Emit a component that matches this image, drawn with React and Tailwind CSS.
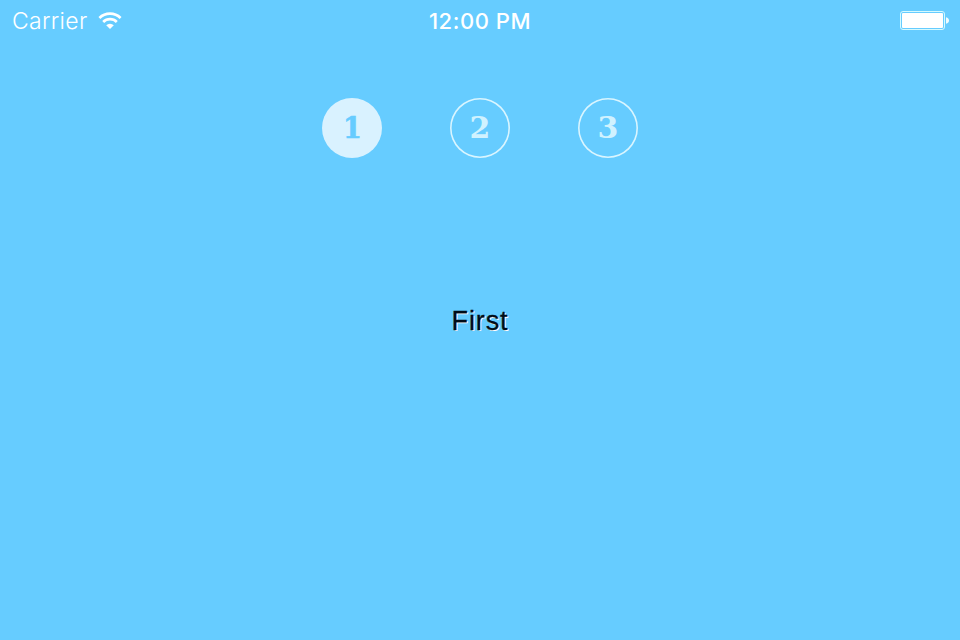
const steps = [1, 2, 3];

function Wifi() {
  return (
    <svg className="ml-[11px] mt-[-1px] h-[17px] w-6" viewBox="0 0 24 17" fill="none" stroke="#fff" strokeWidth="2.7">
      <path d="M1.4 5.9A15.4 15.4 0 0 1 22.6 5.9" />
      <path d="M5.2 10A9.6 9.6 0 0 1 18.8 10" />
      <path d="M12 17L8.2 13.3A5.4 5.4 0 0 1 15.8 13.3Z" fill="#fff" stroke="none" />
    </svg>
  );
}

function Battery() {
  return (
    <svg className="mt-px h-5 w-[49px]" viewBox="0 0 49 20">
      <rect x="0.5" y="0.5" width="44" height="18" rx="2.5" fill="none" stroke="#d5faff" />
      <rect x="2" y="2" width="41" height="15" rx="1" fill="#fff" />
      <path d="M46 6.2Q49 7 49 9.5T46 12.8Z" fill="#f0fcff" />
    </svg>
  );
}

export default function App() {
  return (
    <main className="flex h-[640px] w-[960px] flex-col overflow-hidden bg-[#66ccff] font-['Liberation_Sans',sans-serif]">
      <header className="grid h-10 grid-cols-3 items-center text-white">
        <div className="flex items-center pl-3">
          <span className="pt-px font-['Inter',sans-serif] text-[23px] font-light leading-10 tracking-[0.3px]">Carrier</span>
          <Wifi />
        </div>
        <span className="pt-px text-center font-['Inter',sans-serif] text-[22px] font-medium leading-10 tracking-[0.55px]">
          12:00 PM
        </span>
        <div className="flex justify-end pr-[11px]">
          <Battery />
        </div>
      </header>
      <nav className="mt-[58px] flex justify-center gap-[68px]">
        {steps.map((step) => (
          <div
            key={step}
            className={
              step === 1
                ? "flex size-[60px] items-center justify-center rounded-full bg-[#d9f2ff] text-[#66ccff] [-webkit-text-stroke:0.6px_#66ccff]"
                : "flex size-[60px] items-center justify-center rounded-full text-[#d0f2ff] shadow-[inset_0_0_0_1.6px_#d9f5ff]"
            }
          >
            <span
              className={
                step === 1
                  ? "scale-x-90 font-['DejaVu_Serif',serif] text-[30px] font-bold leading-none"
                  : "font-['DejaVu_Serif',serif] text-[30px] font-bold leading-none"
              }
            >
              {step}
            </span>
          </div>
        ))}
      </nav>
      <p className="mt-[143px] text-center text-[27px] leading-10 tracking-[0.9px] text-[#000c18] [-webkit-text-stroke:0.3px_#000c18] [text-shadow:1px_1px_0_#fff]">
        First
      </p>
    </main>
  );
}
